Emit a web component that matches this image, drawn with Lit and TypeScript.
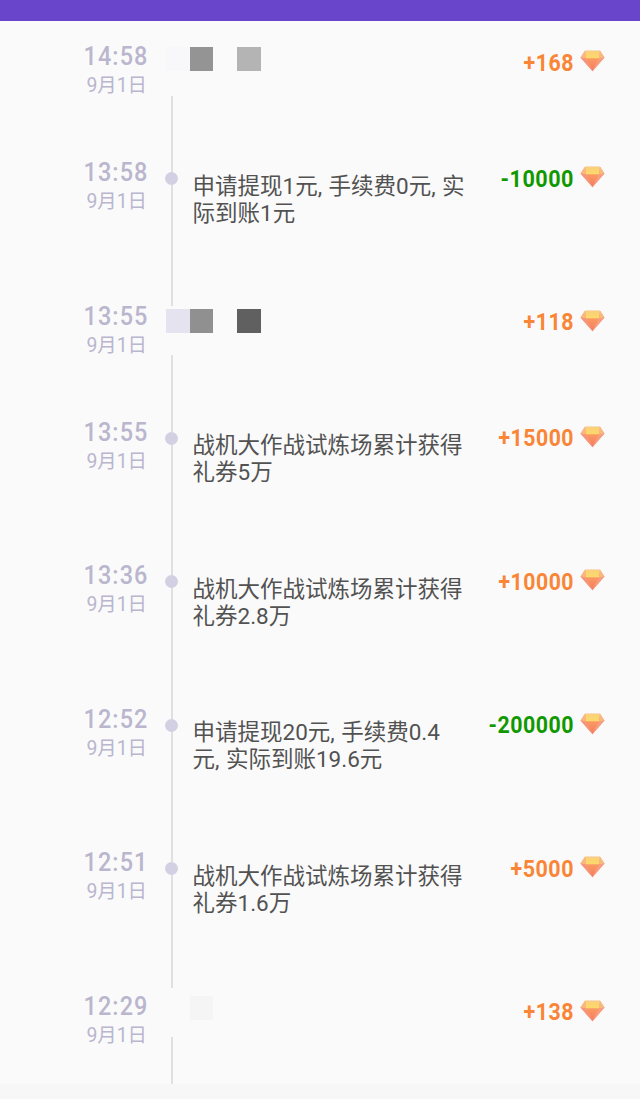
import { LitElement, html, css, nothing } from "lit";
import { customElement, property } from "lit/decorators.js";

interface Entry {
  time: string;
  lines?: string[];
  amount: string;
  width: number;
  height: number;
  railTop?: number;
  mosaicTop?: number;
  blocks?: string[];
}

const won = "战机大作战试炼场累计获得";

const entries: Entry[] = [
  { time: "14:58", amount: "+168", width: 49, height: 116, railTop: 0, mosaicTop: 26.5, blocks: ["#f8f8fa", "#949494", "transparent", "#b4b4b4"] },
  { time: "13:58", amount: "-10000", width: 72, height: 143.5, lines: ["申请提现1元, 手续费0元, 实", "际到账1元"] },
  { time: "13:55", amount: "+118", width: 49, height: 116, railTop: 25.5, mosaicTop: 28.5, blocks: ["#e5e3ef", "#909090", "transparent", "#606060"] },
  { time: "13:55", amount: "+15000", width: 74, height: 143.5, lines: [won, "礼券5万"] },
  { time: "13:36", amount: "+10000", width: 74, height: 143.5, lines: [won, "礼券2.8万"] },
  { time: "12:52", amount: "-200000", width: 84, height: 143.5, lines: ["申请提现20元, 手续费0.4", "元, 实际到账19.6元"] },
  { time: "12:51", amount: "+5000", width: 62, height: 143.5, lines: [won, "礼券1.6万"] },
  { time: "12:29", amount: "+138", width: 49, height: 113.5, railTop: 17.5, mosaicTop: 25.5, blocks: ["transparent", "#f5f5f5"] },
];

@customElement("gem-icon")
class GemIcon extends LitElement {
  static styles = css`
    :host { display: block; width: 25px; height: 22px; }
    svg { display: block; }
  `;
  render() {
    return html`<svg width="25" height="22" viewBox="0 0 25 22">
      <defs>
        <linearGradient id="top" x1="0" y1="0" x2="0" y2="1"><stop offset="0" stop-color="#f9cf7c"/><stop offset="1" stop-color="#fddb66"/></linearGradient>
        <linearGradient id="core" x1="0" y1="0" x2="0" y2="1"><stop offset="0" stop-color="#fb9a62"/><stop offset="1" stop-color="#f77a62"/></linearGradient>
      </defs>
      <path d="M5 .8H20L24.5 7.5 12.5 21.3.5 7.5Z" fill="#f89c7c"/>
      <path d="M5 .8H20L19 8.6H6Z" fill="url(#top)"/>
      <path d="M5 .8.5 7.5 6 8.6ZM20 .8 24.5 7.5 19 8.6Z" fill="#f8b880"/>
      <path d="M6 8.6H19L12.5 21.3Z" fill="url(#core)"/>
      <path d="M.5 7.5 6 8.6 12.5 21.3Z" fill="#f5957a"/>
      <path d="M24.5 7.5 19 8.6 12.5 21.3Z" fill="#f79e80"/>
    </svg>`;
  }
}

@customElement("record-row")
class RecordRow extends LitElement {
  @property({ attribute: false }) entry!: Entry;

  static styles = css`
    :host {
      display: grid;
      grid-template-columns: 147px 18px 13px 14.5px 280px 1fr 25px 35.5px;
      grid-template-rows: 100%;
      font-family: Roboto, "Noto Sans CJK SC", sans-serif;
    }
    svg { display: block; overflow: visible; }
    .when { grid-area: 1 / 1; padding-top: 22.5px; display: flex; flex-direction: column; align-items: flex-end; color: #b9b6ce; }
    .time { font-size: 25.5px; font-weight: 500; letter-spacing: 1.2px; fill: #b9b6ce; }
    .date { font-size: 19.4px; line-height: 24px; margin-top: 5px; white-space: nowrap; }
    .rail { grid-area: 1 / 3; display: flex; flex-direction: column; align-items: center; }
    .segment { width: 2px; flex: none; background: #e0e0e3; }
    .rest { flex: 1; }
    .lead { height: 35.5px; }
    .dot { width: 13px; height: 13px; flex: none; border-radius: 50%; background: #d3d0e3; }
    .gap { height: 49px; flex: none; }
    .gap.first { height: 75px; }
    .mosaic { grid-area: 1 / 3 / 2 / 6; display: flex; margin-left: 1px; }
    .block { width: 23.7px; height: 24px; }
    .text { grid-area: 1 / 5; padding-top: 36px; font-size: 22.5px; line-height: 27.4px; word-spacing: .9px; color: #525252; }
    .line { white-space: nowrap; height: 27.4px; }
    .amount { grid-area: 1 / 6; padding-top: 29px; padding-right: 7px; display: flex; justify-content: flex-end; }
    .value { font-size: 24.5px; font-weight: 700; letter-spacing: .6px; fill: #f98536; }
    .value.minus { fill: #109800; }
    gem-icon { grid-area: 1 / 7; margin-top: 29.5px; }
  `;

  render() {
    const e = this.entry;
    return html`
      <div class="when">
        <svg width="63" height="26"><text class="time" x="-.5" y="22" textLength="65" lengthAdjust="spacingAndGlyphs">${e.time}</text></svg>
        <div class="date">9月1日</div>
      </div>
      <div class="rail">
        ${e.lines
          ? html`<div class="segment lead"></div><div class="dot"></div>`
          : html`<div class="segment" style="height:${e.railTop}px"></div><div class="gap ${e.railTop ? "" : "first"}"></div>`}
        <div class="segment rest"></div>
      </div>
      ${e.blocks
        ? html`<div class="mosaic" style="padding-top:${e.mosaicTop}px">
            ${e.blocks.map((c) => html`<div class="block" style="background:${c}"></div>`)}
          </div>`
        : nothing}
      ${e.lines ? html`<div class="text">${e.lines.map((l) => html`<div class="line">${l}</div>`)}</div>` : nothing}
      <div class="amount">
        <svg width=${e.width} height="26"><text class="value ${e.amount[0] === "-" ? "minus" : ""}" x="-.5" y="20.7" textLength=${e.width + 1.5} lengthAdjust="spacingAndGlyphs">${e.amount}</text></svg>
      </div>
      <gem-icon></gem-icon>
    `;
  }
}

@customElement("app-root")
class AppRoot extends LitElement {
  static styles = css`
    :host { display: block; width: 640px; height: 1099px; overflow: hidden; background: #f7f7f7; }
    .bar { height: 20.5px; background: #6845cb; }
    .list { background: #fafafa; }
  `;
  render() {
    return html`
      <div class="bar"></div>
      <div class="list">
        ${entries.map((e) => html`<record-row .entry=${e} style="height:${e.height}px"></record-row>`)}
      </div>
    `;
  }
}
